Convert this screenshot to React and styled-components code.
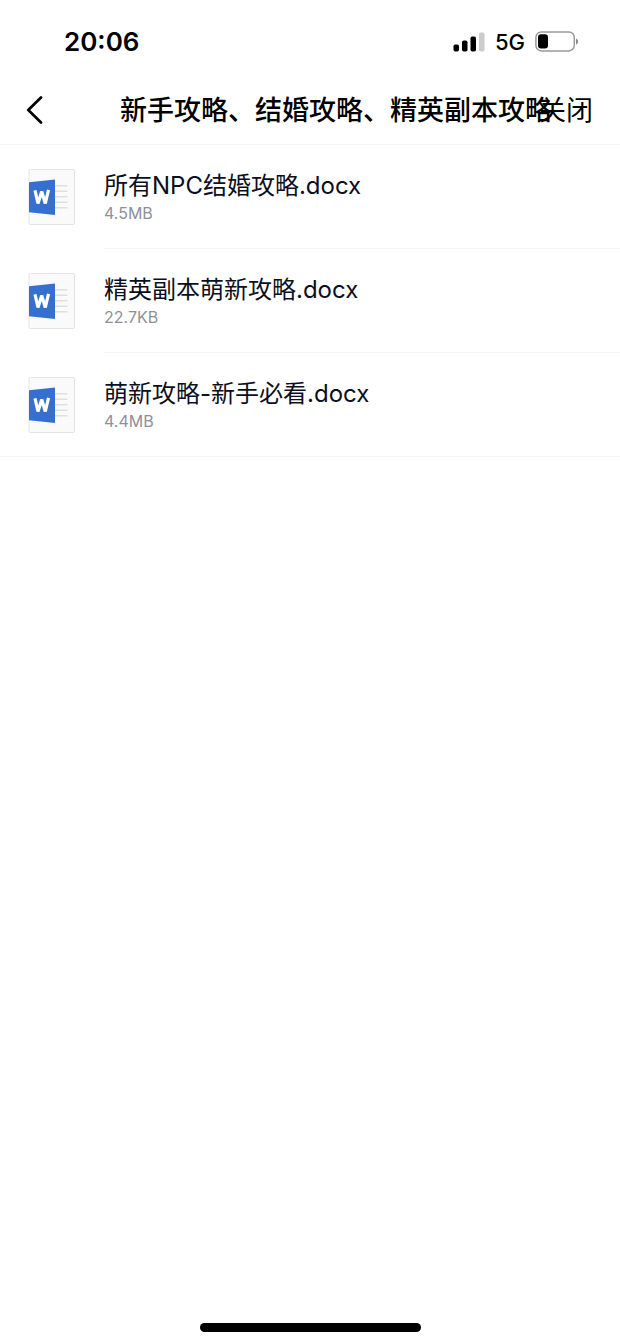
import React from 'react'
import styled, { createGlobalStyle } from 'styled-components'

const color = {
    black: '#000000',
    name: '#0b0e1c',
    size: '#8e9098',
    line: '#f3f3f4',
}

const files = [
    { id: 1, name: '所有NPC结婚攻略.docx', size: '4.5MB' },
    { id: 2, name: '精英副本萌新攻略.docx', size: '22.7KB' },
    { id: 3, name: '萌新攻略-新手必看.docx', size: '4.4MB' },
]

const GlobalStyle = createGlobalStyle`
    body {
        margin: 0;
        background-color: #ffffff;
        font-family: Inter, 'Noto Sans CJK SC', sans-serif;
    }
`
const Page = styled.div`
    display: flex;
    flex-direction: column;
    min-height: 100vh;
`
const StatusBar = styled.div`
    display: flex;
    align-items: center;
    justify-content: space-between;
    height: 76px;
    padding: 8px 41px 0 64px;
    box-sizing: border-box;
    color: ${color.black};
`
const Time = styled.time`
    font-size: 26px;
    line-height: 32px;
    font-weight: 600;
`
const Indicators = styled.div`
    display: flex;
    align-items: center;
    gap: 10px;
`
const Network = styled.span`
    font-size: 22px;
    line-height: 32px;
    font-weight: 500;
`
const Header = styled.header`
    display: grid;
    grid-template-columns: 120px minmax(0, 1fr) auto;
    align-items: center;
    height: 69px;
    padding: 2px 27px 0 0;
    box-sizing: border-box;
    border-bottom: 1px solid ${color.line};
`
const HeaderButton = styled.button`
    padding: 0;
    border: none;
    background: none;
    color: ${color.black};
    font-family: inherit;
    font-size: 27px;
    line-height: 40px;
    font-weight: 400;
    cursor: pointer;
`
const BackButton = styled(HeaderButton)`
    display: flex;
    align-items: center;
    height: 40px;
    padding-left: 26px;
`
const Title = styled.h1`
    margin: 0;
    color: ${color.black};
    font-size: 27px;
    line-height: 40px;
    font-weight: 500;
    white-space: nowrap;
`
const FileList = styled.ul`
    margin: 0;
    padding: 0;
    list-style: none;
`
const FileItem = styled.li`
    &:last-child {
        border-bottom: 1px solid ${color.line};
    }
`
const FileLink = styled.a`
    display: flex;
    align-items: flex-start;
    gap: 28px;
    padding-left: 28px;
    color: ${color.name};
    text-decoration: none;
    > svg {
        flex-shrink: 0;
        margin-top: 24px;
    }
`
const FileInfo = styled.div`
    display: flex;
    flex: 1;
    flex-direction: column;
    height: 104px;
    padding-top: 25px;
    box-sizing: border-box;
    border-bottom: 1px solid ${color.line};
    ${FileItem}:last-child & {
        height: 103px;
        border-bottom: none;
    }
`
const FileName = styled.span`
    font-size: 24px;
    line-height: 32px;
`
const FileSize = styled.span`
    color: ${color.size};
    font-size: 16px;
    line-height: 22px;
`
const HomeIndicator = styled.div`
    width: 221px;
    height: 9px;
    margin: auto auto 12px;
    border-radius: 5px;
    background-color: ${color.black};
`

function SignalIcon() {
    return (
        <svg width="32" height="20" viewBox="0 0 32 20" aria-hidden="true">
            <rect x="0.5" y="12.5" width="5.5" height="7" rx="1.8" />
            <rect x="9" y="8.5" width="5.5" height="11" rx="1.8" />
            <rect x="17.5" y="4.5" width="5.5" height="15" rx="1.8" />
            <rect x="26" y="0.5" width="5.5" height="19" rx="1.8" fill="#cccccc" />
        </svg>
    )
}

function BatteryIcon() {
    return (
        <svg width="44" height="22" viewBox="0 0 44 22" aria-hidden="true">
            <rect x="0.9" y="0.9" width="38.4" height="19" rx="5.5" fill="none" stroke="#999999" strokeWidth="1.5" />
            <rect x="3" y="3.2" width="10" height="14.4" rx="3" />
            <path d="M41 7.5v6.2c1.3-.5 2.1-1.700 2.100-3.100S42.300 8 41 7.500z" fill="#8c8c8c" />
        </svg>
    )
}

function BackIcon() {
    return (
        <svg width="18" height="30" viewBox="0 0 18 30" fill="none" aria-hidden="true">
            <path d="M15 1.500L2.300 14 15 26.500" stroke="#000000" strokeWidth="2.700" strokeLinecap="round" strokeLinejoin="round" />
        </svg>
    )
}

function WordIcon() {
    return (
        <svg width="48" height="56" viewBox="0 0 48 56" fill="none" aria-hidden="true">
            <rect x="1" y="0.5" width="45.500" height="55" rx="1.500" fill="#fafafa" stroke="#e2e2e2" />
            <path d="M27 16.800h12.500M27 22.300h12.500M27 27.800h12.500M27 33.300h12.500M27 38.800h12.500" stroke="#dfdfdf" strokeWidth="1.600" />
            <path d="M1 13.200L27 10.500V46L1 43.300z" fill="#3570cf" />
            <path d="M7 21.300L10 34.500 13.700 22.500 17.300 34.500 20.500 20.800" stroke="#ffffff" strokeWidth="3.200" strokeLinejoin="bevel" />
        </svg>
    )
}

export default function App() {
    return (
        <Page>
            <GlobalStyle />
            <StatusBar>
                <Time>20:06</Time>
                <Indicators>
                    <SignalIcon />
                    <Network>5G</Network>
                    <BatteryIcon />
                </Indicators>
            </StatusBar>
            <Header>
                <BackButton type="button" aria-label="返回"><BackIcon /></BackButton>
                <Title>新手攻略、结婚攻略、精英副本攻略</Title>
                <HeaderButton type="button">关闭</HeaderButton>
            </Header>
            <FileList>
                {files.map(file => (
                    <FileItem key={file.id}>
                        <FileLink href={`#file-${file.id}`}>
                            <WordIcon />
                            <FileInfo>
                                <FileName>{file.name}</FileName>
                                <FileSize>{file.size}</FileSize>
                            </FileInfo>
                        </FileLink>
                    </FileItem>
                ))}
            </FileList>
            <HomeIndicator />
        </Page>
    )
}
